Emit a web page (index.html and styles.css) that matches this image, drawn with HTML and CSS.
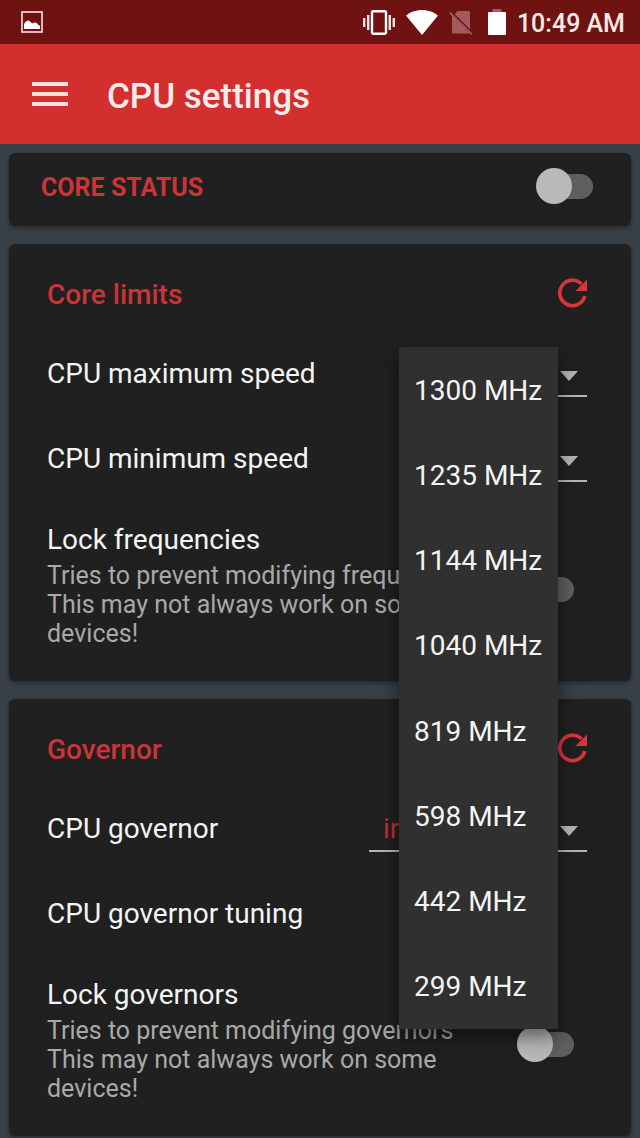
FILE: index.html
```html
<!DOCTYPE html>
<html lang="en">
<head>
<meta charset="utf-8">
<meta name="viewport" content="width=device-width, initial-scale=1">
<title>CPU settings</title>
<link rel="stylesheet" href="styles.css">
</head>
<body>
<div class="status-bar">
  <svg class="status-image" width="22" height="22" viewBox="0 0 22 22" aria-hidden="true">
    <rect x="1" y="1" width="20" height="20" fill="none" stroke="#fbe3e3" stroke-width="1.6"/>
    <path d="M3 18v-4.500l1-2.200 1.800-1.400 1.700-.3 2.200 1.400 1.300 1.600 1.600-.9 2.200-.2 1.700 1.300.8 1.200 1.700.8V18z" fill="#fff"/>
  </svg>
  <div class="status-right">
    <svg width="32" height="25" viewBox="0 0 32 25" aria-hidden="true">
      <rect x="9" y="1.200" width="14" height="22.600" rx="1.200" fill="none" stroke="#fff" stroke-width="2.400"/>
      <path d="M0 8h2.400v9H0zM4 5h2.400v15H4zM25.600 5h2.400v15h-2.400zM29.600 8H32v9h-2.400z" fill="#fbe3e3"/>
    </svg>
    <svg width="32" height="25" viewBox="0 0 32 25" aria-hidden="true">
      <path d="M16 25 0 5.600C4 2.200 9.600 0 16 0s12 2.200 16 5.600z" fill="#fff"/>
    </svg>
    <svg class="status-sim" width="24" height="25" viewBox="0 0 24 25" aria-hidden="true">
      <path d="M8.500 1h11Q21 1 21 2.500V19.300L5.800 4.200zM3 5.400 20.500 23.500H4.500Q3 23.500 3 22z" fill="#a35c5e"/>
      <path d="M.8 2.600 22.800 24.400" stroke="#a35c5e" stroke-width="1.800"/>
    </svg>
    <svg class="status-battery" width="18" height="26" viewBox="0 0 18 26" aria-hidden="true">
      <path d="M4.500 0h9v3h-9z" fill="#a35c5e"/>
      <path d="M1 3h16q1 0 1 1v21q0 1-1 1H1q-1 0-1-1V4q0-1 1-1z" fill="#fff"/>
    </svg>
    <time class="clock" datetime="10:49">10:49 AM</time>
  </div>
</div>

<header class="app-bar">
  <button class="icon-button" type="button" aria-label="Open menu">
    <svg width="36" height="24" viewBox="3 6 18 12" aria-hidden="true"><path d="M3 18h18v-2H3zM3 13h18v-2H3zM3 6v2h18V6z" fill="#fbe3e3"/></svg>
  </button>
  <h1 class="app-title">CPU settings</h1>
</header>

<main class="content">
  <section class="card card-status">
    <label class="status-label" for="core-status">CORE STATUS</label>
    <input class="switch" type="checkbox" role="switch" id="core-status">
  </section>

  <section class="card card-group">
    <div class="group-head">
      <h2 class="group-title">Core limits</h2>
      <button class="icon-button" type="button" aria-label="Reset core limits">
        <svg width="29" height="30" viewBox="0 0 29 30" aria-hidden="true">
          <path d="M26.800 18A12.700 12.700 0 1 1 23.500 6" fill="none" stroke="#d9363a" stroke-width="3.600"/>
          <path d="M29 1.500V13H17.500z" fill="#d9363a"/>
        </svg>
      </button>
    </div>
    <div class="row">
      <label class="row-label" for="max-speed">CPU maximum speed</label>
      <div class="spinner">
        <select class="spinner-field" id="max-speed">
          <option>1300 MHz</option>
          <option>1235 MHz</option>
          <option>1144 MHz</option>
          <option>1040 MHz</option>
          <option>819 MHz</option>
          <option>598 MHz</option>
          <option>442 MHz</option>
          <option>299 MHz</option>
        </select>
        <span class="spinner-arrow"></span>
        <ul class="popup" role="listbox" aria-label="CPU maximum speed">
          <li class="popup-item" role="option">1300 MHz</li>
          <li class="popup-item" role="option">1235 MHz</li>
          <li class="popup-item" role="option">1144 MHz</li>
          <li class="popup-item" role="option">1040 MHz</li>
          <li class="popup-item" role="option">819 MHz</li>
          <li class="popup-item" role="option">598 MHz</li>
          <li class="popup-item" role="option">442 MHz</li>
          <li class="popup-item" role="option">299 MHz</li>
        </ul>
      </div>
    </div>
    <div class="row">
      <label class="row-label" for="min-speed">CPU minimum speed</label>
      <div class="spinner">
        <select class="spinner-field" id="min-speed">
          <option>299 MHz</option>
        </select>
        <span class="spinner-arrow"></span>
      </div>
    </div>
    <div class="row row-lock">
      <div class="lock-text">
        <label class="row-label" for="lock-freq">Lock frequencies</label>
        <p class="row-note">Tries to prevent modifying frequencies<br>This may not always work on some devices!</p>
      </div>
      <input class="switch" type="checkbox" role="switch" id="lock-freq">
    </div>
  </section>

  <section class="card card-group">
    <div class="group-head">
      <h2 class="group-title">Governor</h2>
      <button class="icon-button" type="button" aria-label="Reset governor">
        <svg width="29" height="30" viewBox="0 0 29 30" aria-hidden="true">
          <path d="M26.800 18A12.700 12.700 0 1 1 23.500 6" fill="none" stroke="#d9363a" stroke-width="3.600"/>
          <path d="M29 1.500V13H17.500z" fill="#d9363a"/>
        </svg>
      </button>
    </div>
    <div class="row">
      <label class="row-label" for="governor">CPU governor</label>
      <div class="spinner spinner-wide">
        <select class="spinner-field" id="governor">
          <option>interactive</option>
        </select>
        <span class="spinner-arrow"></span>
      </div>
    </div>
    <div class="row">
      <span class="row-label">CPU governor tuning</span>
    </div>
    <div class="row row-lock">
      <div class="lock-text">
        <label class="row-label" for="lock-gov">Lock governors</label>
        <p class="row-note">Tries to prevent modifying governors<br>This may not always work on some devices!</p>
      </div>
      <input class="switch" type="checkbox" role="switch" id="lock-gov">
    </div>
  </section>
</main>
</body>
</html>
```

FILE: styles.css
```css
* {
  box-sizing: border-box;
}

body {
  margin: 0;
  background: #374047;
  color: #f4f4f4;
  font-family: Roboto, "Noto Sans", sans-serif;
  font-size: 28px;
  line-height: 34px;
}

h1,
h2,
p,
ul {
  margin: 0;
  padding: 0;
}

svg {
  display: block;
}

.icon-button {
  padding: 0;
  border: 0;
  background: none;
}

.status-bar {
  display: flex;
  align-items: center;
  justify-content: space-between;
  height: 44px;
  padding: 0 15px 0 21px;
  background: #6e1212;
}

.status-right {
  display: flex;
  align-items: center;
  gap: 11px;
}

.status-battery {
  margin-left: 4px;
}

.clock {
  padding-top: 4px;
  color: #fbe9e9;
  font-size: 25px;
  font-weight: 500;
  line-height: 30px;
}

.app-bar {
  display: flex;
  align-items: center;
  gap: 39px;
  height: 100px;
  padding: 0 32px;
  background: #d32f2f;
}

.app-title {
  padding-top: 5px;
  color: #fdecec;
  font-size: 35px;
  font-weight: 500;
  line-height: 42px;
}

.content {
  display: flex;
  flex-direction: column;
  gap: 18px;
  padding: 9px 9px 2px;
}

.card {
  border-radius: 6px;
  background: #202020;
  box-shadow: 0 2px 4px rgba(0, 0, 0, 0.35);
}

.card-status {
  display: flex;
  align-items: center;
  justify-content: space-between;
  min-height: 73px;
  padding: 0 38px 7px 32px;
}

.status-label {
  padding-top: 3px;
  color: #cb3439;
  font-size: 25px;
  font-weight: 700;
}

.card-group {
  padding: 20px 44px 4px 38px;
}

.group-head {
  display: flex;
  align-items: center;
  justify-content: space-between;
  height: 58px;
  margin-bottom: 9px;
}

.group-title {
  padding-top: 4px;
  color: #cb3439;
  font-size: 28px;
  font-weight: 500;
}

.row {
  display: flex;
  align-items: center;
  justify-content: space-between;
  min-height: 85px;
}

.row-label {
  display: block;
}

.spinner {
  position: relative;
  display: grid;
  align-items: center;
  width: 188px;
  height: 47px;
}

.spinner-wide {
  width: 218px;
}

.spinner-field {
  grid-area: 1 / 1;
  width: 100%;
  height: 47px;
  padding: 2px 44px 0 14px;
  border: 0;
  border-bottom: 2px solid #b5b5b5;
  border-radius: 0;
  background: none;
  color: #c62f34;
  font: inherit;
  appearance: none;
}

.spinner-arrow {
  grid-area: 1 / 1;
  justify-self: end;
  margin: 4px 9px 0 0;
  border: 9px solid transparent;
  border-top: 10px solid #b5b5b5;
  border-bottom: 0;
  pointer-events: none;
}

.popup {
  position: absolute;
  z-index: 2;
  top: -3px;
  left: 0;
  display: grid;
  grid-auto-rows: 1fr;
  width: 159px;
  height: 682px;
  background: #303030;
  box-shadow: 0 8px 18px rgba(0, 0, 0, 0.5);
  list-style: none;
}

.popup-item {
  display: flex;
  align-items: center;
  padding: 2px 0 0 15px;
  white-space: nowrap;
}

.row-lock {
  min-height: 176px;
}

.lock-text {
  padding: 22px 0 29px;
}

.row-note {
  margin-top: 4px;
  color: #a9a9a9;
  font-size: 25px;
  line-height: 29px;
}

.switch {
  display: grid;
  flex: none;
  align-items: center;
  width: 57px;
  height: 36px;
  margin: 0;
  appearance: none;
}

.row-lock .switch {
  margin-right: 13px;
}

.switch::before,
.switch::after {
  grid-area: 1 / 1;
  content: "";
}

.switch::before {
  justify-self: end;
  width: 48px;
  height: 25px;
  border-radius: 13px;
  background: #5f5f5f;
}

.switch::after {
  width: 36px;
  height: 36px;
  border-radius: 50%;
  background: #b9b9b9;
}
```
